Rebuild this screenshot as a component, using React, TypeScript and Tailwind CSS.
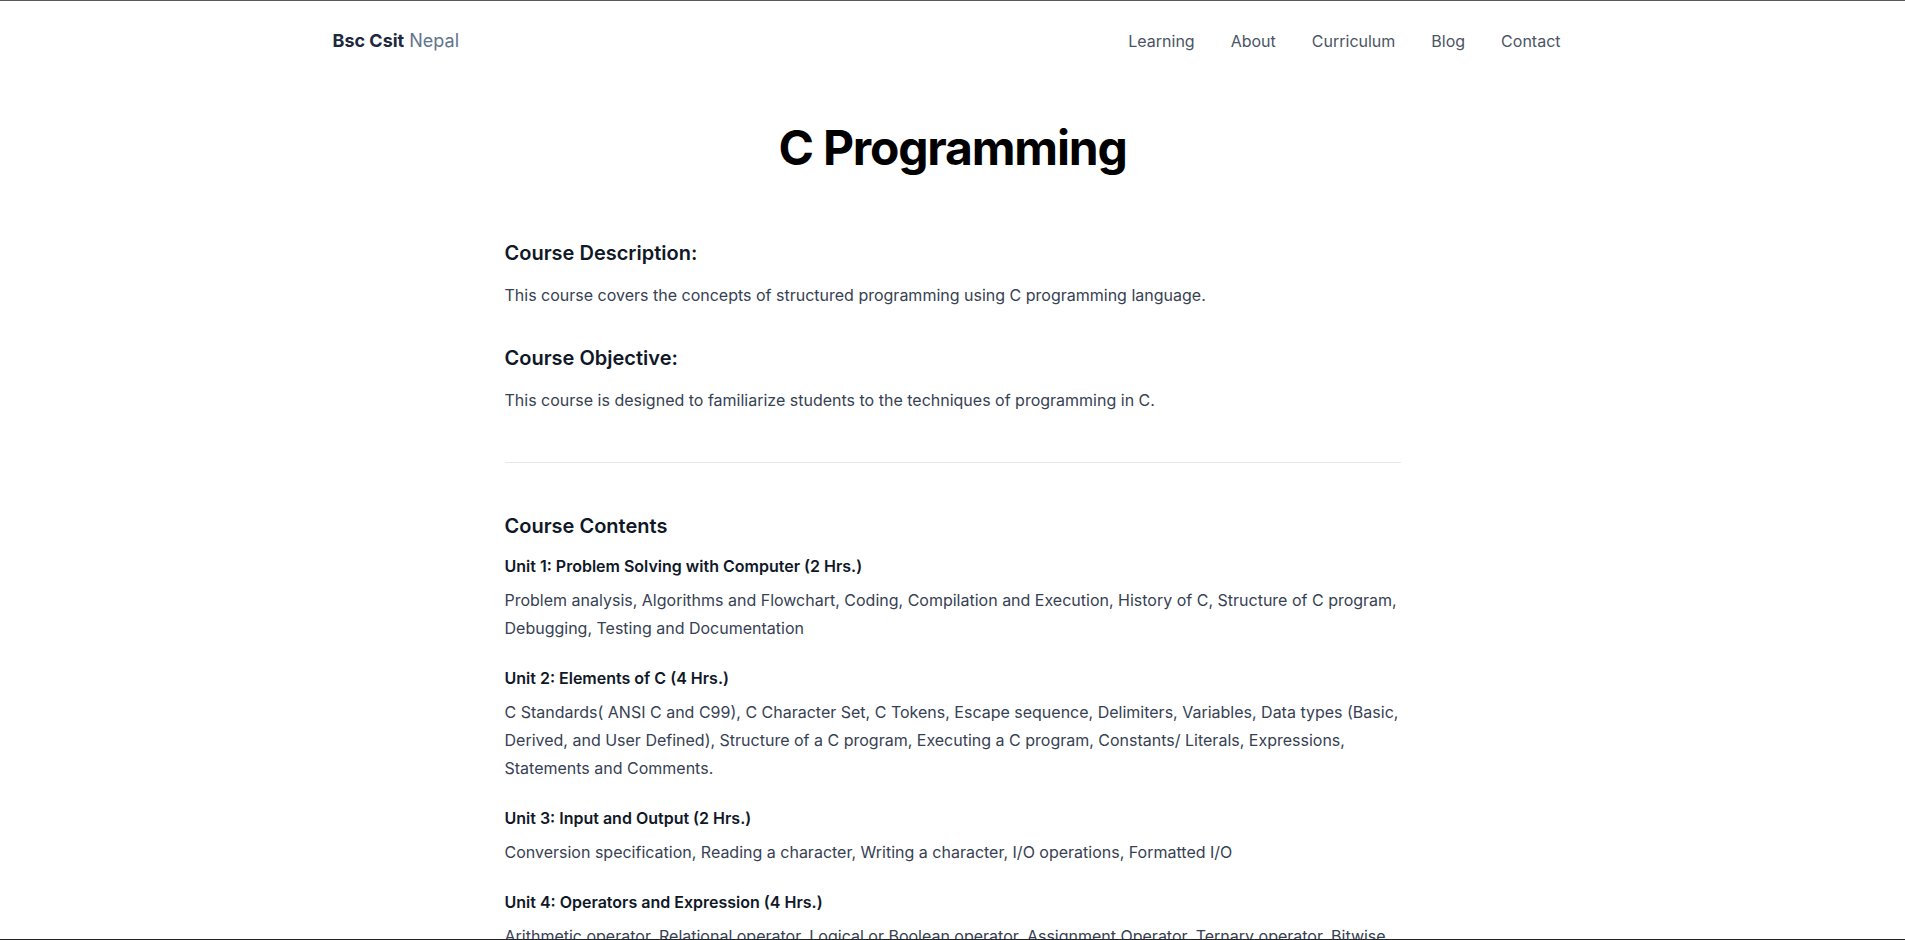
import React from 'react';

const NAV_LINKS = ["Learning", "About", "Curriculum", "Blog", "Contact"];

// Syllabus units shown under "Course Contents"
const UNITS = [
  {
    title: "Unit 1: Problem Solving with Computer (2 Hrs.)",
    body: "Problem analysis, Algorithms and Flowchart, Coding, Compilation and Execution, History of C, Structure of C program, Debugging, Testing and Documentation",
  },
  {
    title: "Unit 2: Elements of C (4 Hrs.)",
    body: "C Standards( ANSI C and C99), C Character Set, C Tokens, Escape sequence, Delimiters, Variables, Data types (Basic, Derived, and User Defined), Structure of a C program, Executing a C program, Constants/ Literals, Expressions, Statements and Comments.",
  },
  {
    title: "Unit 3: Input and Output (2 Hrs.)",
    body: "Conversion specification, Reading a character, Writing a character, I/O operations, Formatted I/O",
  },
  {
    title: "Unit 4: Operators and Expression (4 Hrs.)",
    body: "Arithmetic operator, Relational operator, Logical or Boolean operator, Assignment Operator, Ternary operator, Bitwise operator, Increment or Decrement operator, Conditional operator, Special Operators(sizeof and comma), Evaluation of Expression, Operator Precedence and Associativity.",
  },
  {
    title: "Unit 5: Control Statement (4 Hrs.)",
    body: "Conditional Statements, Decision Making and Branching, Decision Making and Looping, Exit function, Break and Continue.",
  },
];

export default function App() {
  return (
    <div className="h-screen overflow-hidden bg-white border-t border-t-[#5a5a5a] border-b border-b-[#222222] font-['Inter',sans-serif]">
      {/* Top navigation */}
      <header className="max-w-7xl mx-auto px-5 h-20 flex items-center justify-between">
        <a href="#" className="text-lg">
          <span className="font-bold text-slate-800">Bsc Csit</span>{" "}
          <span className="text-slate-500">Nepal</span>
        </a>
        <nav className="flex items-center gap-3">
          {NAV_LINKS.map((link) => (
            <a key={link} href="#" className="px-3 text-base text-gray-600 hover:text-gray-900">
              {link}
            </a>
          ))}
        </nav>
      </header>

      <main className="max-w-4xl mx-auto pt-[43px]">
        <h1 className="text-5xl leading-none font-bold tracking-tight text-black text-center mb-[67px]">
          C Programming
        </h1>

        <section className="mb-[35px]">
          <h2 className="text-xl leading-7 font-semibold text-gray-900 mb-3.5">Course Description:</h2>
          <p className="text-base leading-7 text-gray-700">
            This course covers the concepts of structured programming using C programming language.
          </p>
        </section>

        <section>
          <h2 className="text-xl leading-7 font-semibold text-gray-900 mb-3.5">Course Objective:</h2>
          <p className="text-base leading-7 text-gray-700">
            This course is designed to familiarize students to the techniques of programming in C.
          </p>
        </section>

        <hr className="mt-12 mb-[49px] border-gray-200" />

        <section>
          <h2 className="text-xl leading-7 font-semibold text-gray-900 mb-3.5">Course Contents</h2>
          <div className="flex flex-col gap-6">
            {UNITS.map((unit) => (
              <div key={unit.title}>
                <h3 className="text-base leading-6 font-semibold text-gray-900 mb-2">{unit.title}</h3>
                <p className="text-base leading-7 text-gray-700">{unit.body}</p>
              </div>
            ))}
          </div>
        </section>
      </main>
    </div>
  );
}
